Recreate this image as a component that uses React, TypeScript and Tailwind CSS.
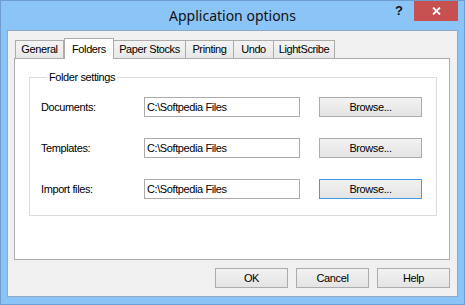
import React from "react";

const tabs = [
  { label: "General", w: "w-[49px]" },
  { label: "Folders", w: "w-[50px]", active: true },
  { label: "Paper Stocks", w: "w-[73px]" },
  { label: "Printing", w: "w-[49px]" },
  { label: "Undo", w: "w-[41px]" },
  { label: "LightScribe", w: "w-[62px]" },
];

const rows = [
  { label: "Documents:", value: "C:\\Softpedia Files" },
  { label: "Templates:", value: "C:\\Softpedia Files" },
  { label: "Import files:", value: "C:\\Softpedia Files", focused: true },
];

const ui = "font-['Liberation_Sans',Arial,sans-serif] text-[11px] tracking-[-0.4px] text-black";

function Button({ label, className = "", focused = false }: { label: string; className?: string; focused?: boolean }) {
  return (
    <button
      className={`h-[20px] flex items-center justify-center border bg-linear-to-b from-[#f2f2f2] to-[#e4e4e4] leading-none ${
        focused ? "border-[#3d9be9]" : "border-[#acacac]"
      } ${className}`}
    >
      {label}
    </button>
  );
}

export default function App() {
  return (
    <div className={`w-[465px] h-[305px] flex flex-col bg-[#8bc4f7] border border-[#6d9dcf] ${ui}`}>
      {/* title bar */}
      <div className="h-[29px] grid grid-cols-[1fr_auto_1fr]">
        <div />
        <div className="flex items-center font-['Noto_Sans',sans-serif] text-[14px] tracking-normal text-[#111]">
          Application options
        </div>
        <div className="flex justify-end items-start pr-[6px]">
          <div className="w-[22px] mr-[4px] h-[20px] flex items-center justify-center font-bold text-[13px] tracking-normal text-[#111]">
            ?
          </div>
          <div className="w-[44px] h-[20px] bg-[#c75050] flex items-center justify-center">
            <svg width="9" height="8" viewBox="0 0 9 8">
              <path d="M1 0.5 L8 7.5 M8 0.5 L1 7.5" stroke="white" strokeWidth="1.8" />
            </svg>
          </div>
        </div>
      </div>

      {/* client area */}
      <div className="mx-[6px] mb-[7px] flex-1 flex flex-col border border-[#8da9c7] bg-[#f0f0f0] pt-[7px] pl-[6px] pr-[7px] pb-[8px]">
        <div className="flex items-end pl-[1px]">
          {tabs.map((t) =>
            t.active ? (
              <div
                key={t.label}
                className={`${t.w} h-[21px] -mb-px relative z-10 bg-white border border-b-0 border-[#acacac] flex items-center justify-center`}
              >
                {t.label}
              </div>
            ) : (
              <div
                key={t.label}
                className={`${t.w} h-[18px] bg-linear-to-b from-[#f3f3f3] to-[#e8e8e8] border border-b-0 border-[#acacac] -ml-px first:ml-0 flex items-center justify-center`}
              >
                {t.label}
              </div>
            )
          )}
        </div>

        <div className="h-[202px] bg-white border border-[#acacac] pt-[12px] pl-[14px] pr-[12px]">
          <fieldset className="border border-[#dcdcdc] pl-[11px] pr-[14px] pb-[16px]">
            <legend className="ml-[6px] px-[2px] leading-[13px]">Folder settings</legend>
            <div className="flex flex-col gap-[21px] pt-[13px]">
              {rows.map((r) => (
                <div key={r.label} className="flex items-center h-[20px]">
                  <div className="w-[103px]">{r.label}</div>
                  <div className="w-[156px] h-[20px] border border-[#ababab] bg-white flex items-center pl-[2px]">
                    {r.value}
                  </div>
                  <Button label="Browse..." className="w-[103px] ml-[19px]" focused={r.focused} />
                </div>
              ))}
            </div>
          </fieldset>
        </div>

        <div className="flex justify-end gap-[8px] mt-[8px]">
          <Button label="OK" className="w-[73px]" />
          <Button label="Cancel" className="w-[73px]" />
          <Button label="Help" className="w-[73px]" />
        </div>
      </div>
    </div>
  );
}
